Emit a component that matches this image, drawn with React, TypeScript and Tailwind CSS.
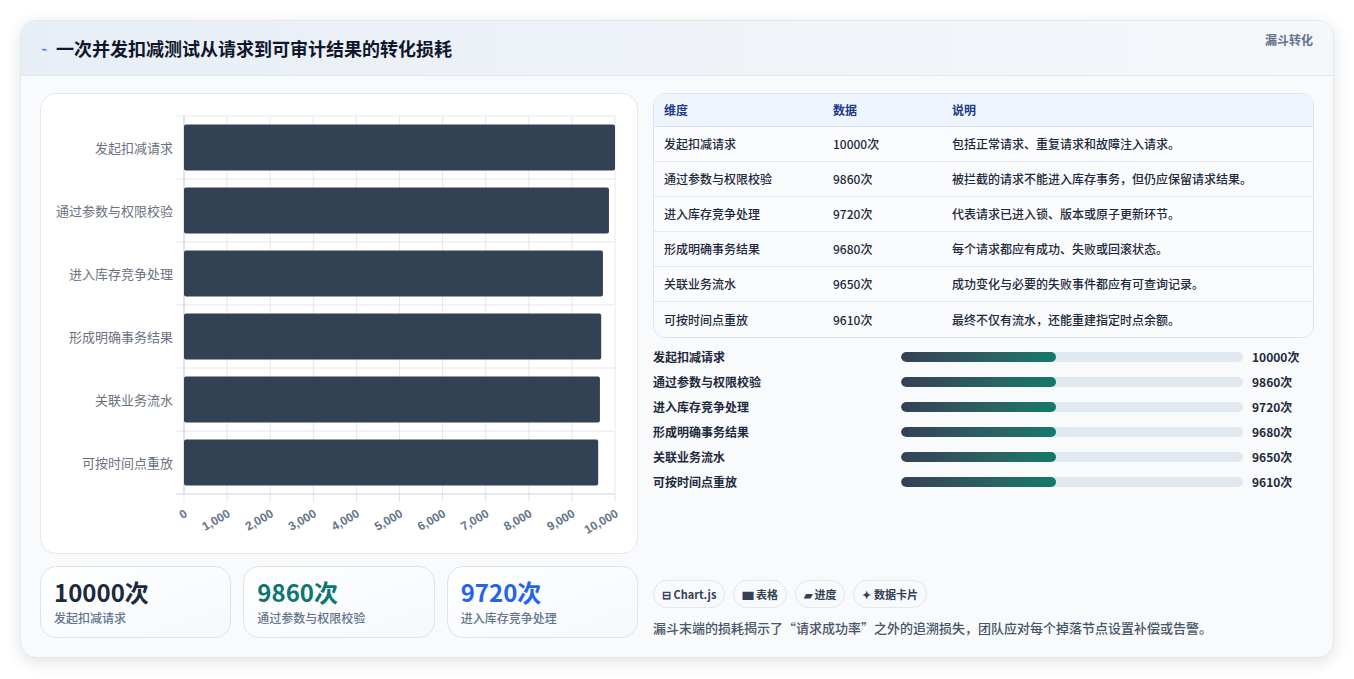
import React from "react";

const rows = [
  ["发起扣减请求", 10000, "包括正常请求、重复请求和故障注入请求。"],
  ["通过参数与权限校验", 9860, "被拦截的请求不能进入库存事务，但仍应保留请求结果。"],
  ["进入库存竞争处理", 9720, "代表请求已进入锁、版本或原子更新环节。"],
  ["形成明确事务结果", 9680, "每个请求都应有成功、失败或回滚状态。"],
  ["关联业务流水", 9650, "成功变化与必要的失败事件都应有可查询记录。"],
  ["可按时间点重放", 9610, "最终不仅有流水，还能重建指定时点余额。"],
] as const;

function Chart() {
  const x0 = 143, x1 = 574, y0 = 22, y1 = 400;
  const w = x1 - x0;
  const band = (y1 - y0) / 6;
  return (
    <svg width="597" height="460" className="block" style={{ fontFamily: '"Noto Sans CJK SC","Liberation Sans",sans-serif' }}>
      {Array.from({ length: 11 }).map((_, i) => {
        const x = x0 + (w * i) / 10;
        return <line key={i} x1={x} x2={x} y1={y0} y2={y1 + 8} stroke="#e5e7eb" />;
      })}
      {Array.from({ length: 7 }).map((_, i) => {
        const y = y0 + band * i;
        return <line key={i} x1={x0 - 8} x2={x1} y1={y} y2={y} stroke={i === 6 ? "#cbd5e1" : "#e5e7eb"} />;
      })}
      <line x1={x0} x2={x0} y1={y0} y2={y1} stroke="#cbd5e1" />
      {rows.map((r, i) => {
        const yc = y0 + band * i + band / 2;
        return (
          <g key={i}>
            <rect x={x0} y={yc - 23} width={(w * r[1]) / 10000} height={46} rx={2} fill="#334155" />
            <text x={x0 - 11} y={yc + 5} textAnchor="end" fontSize="13" fill="#6b7280">{r[0]}</text>
          </g>
        );
      })}
      {Array.from({ length: 11 }).map((_, i) => {
        const x = x0 + (w * i) / 10;
        const label = i === 0 ? "0" : (i * 1000).toLocaleString("en-US");
        return (
          <text key={i} x={x + 4} y={y1 + 22} textAnchor="end" fontSize="12" fontWeight="700" fill="#64748b"
            transform={`rotate(-30 ${x + 4} ${y1 + 22})`} style={{ fontFamily: '"Liberation Sans",sans-serif' }}>{label}</text>
        );
      })}
    </svg>
  );
}

export default function App() {
  return (
    <div className="min-h-[679px] bg-white p-5 pr-5" style={{ fontFamily: '"Noto Sans CJK SC","Noto Sans",sans-serif' }}>
      <div className="w-[1314px] rounded-2xl border border-[#e2e8f0] bg-[#f8fafc] shadow-[0_4px_16px_rgba(15,23,42,0.12)] overflow-hidden">
        <div className="h-[55px] flex items-center justify-between px-5 bg-gradient-to-r from-[#e8eef6] to-[#f5f8fb] border-b border-[#e2e8f0]">
          <div className="flex items-center gap-2">
            <span className="text-[#3b6fd8] text-[11px]">⌁</span>
            <span className="text-[18px] font-bold text-[#0f172a]">一次并发扣减测试从请求到可审计结果的转化损耗</span>
          </div>
          <span className="text-[12px] font-bold text-[#64748b] -mt-4">漏斗转化</span>
        </div>
        <div className="flex gap-[15px] px-[19px] pt-[17px] pb-[19px]">
          <div className="w-[598px] flex flex-col gap-3">
            <div className="h-[461px] rounded-2xl border border-[#e2e8f0] bg-white">
              <Chart />
            </div>
            <div className="grid grid-cols-3 gap-3">
              {[
                ["10000次", "发起扣减请求", "text-[#1e293b]"],
                ["9860次", "通过参数与权限校验", "text-[#0f766e]"],
                ["9720次", "进入库存竞争处理", "text-[#2563eb]"],
              ].map(([v, l, c]) => (
                <div key={l} className="h-[72px] rounded-2xl border border-[#dbe5f1] bg-gradient-to-br from-white to-[#f5f8fc] px-[13px] pt-[10px]">
                  <div className={`text-[24px] font-bold leading-[30px] ${c}`}>{v}</div>
                  <div className="text-[12px] text-[#64748b] font-medium mt-[2px]">{l}</div>
                </div>
              ))}
            </div>
          </div>
          <div className="flex-1 flex flex-col">
            <div className="rounded-xl border border-[#dbe3ee] bg-white overflow-hidden text-[12px]">
              <div className="grid grid-cols-[169px_119px_1fr] h-[33px] items-center px-[10px] bg-[#eff5fd] border-b border-[#d5dfeb] font-bold text-[#1e3a8a]">
                <span>维度</span><span>数据</span><span>说明</span>
              </div>
              {rows.map((r, i) => (
                <div key={i} className={`grid grid-cols-[169px_119px_1fr] h-[35px] items-center px-[10px] font-medium text-[#1e293b] ${i % 2 ? "bg-[#f8fafc]" : "bg-[#fbfcfe]"} ${i < 5 ? "border-b border-[#e5eaf0]" : ""}`}>
                  <span>{r[0]}</span><span>{r[1]}次</span><span>{r[2]}</span>
                </div>
              ))}
            </div>
            <div className="mt-[10px] flex flex-col gap-[7px]">
              {rows.map((r, i) => (
                <div key={i} className="flex items-center h-[18px] text-[12px] font-bold text-[#1e293b]">
                  <span className="w-[248px]">{r[0]}</span>
                  <div className="w-[342px] h-[10px] rounded-full bg-[#e2e8f0] overflow-hidden">
                    <div className="h-full w-[155px] rounded-full bg-gradient-to-r from-[#334155] to-[#0f7a6a]" />
                  </div>
                  <span className="ml-[9px]">{r[1]}次</span>
                </div>
              ))}
            </div>
            <div className="mt-auto flex gap-2 text-[11px] font-bold text-[#334155]">
              {["⊟ Chart.js", "▆ 表格", "▰ 进度", "✦ 数据卡片"].map((t) => (
                <span key={t} className="h-[28px] px-[8px] flex items-center rounded-full border border-[#e2e8f0] bg-[#f8fafc]">{t}</span>
              ))}
            </div>
            <p className="mt-[10px] text-[13px] text-[#475569] font-medium leading-[20px]">漏斗末端的损耗揭示了“请求成功率”之外的追溯损失，团队应对每个掉落节点设置补偿或告警。</p>
          </div>
        </div>
      </div>
    </div>
  );
}
